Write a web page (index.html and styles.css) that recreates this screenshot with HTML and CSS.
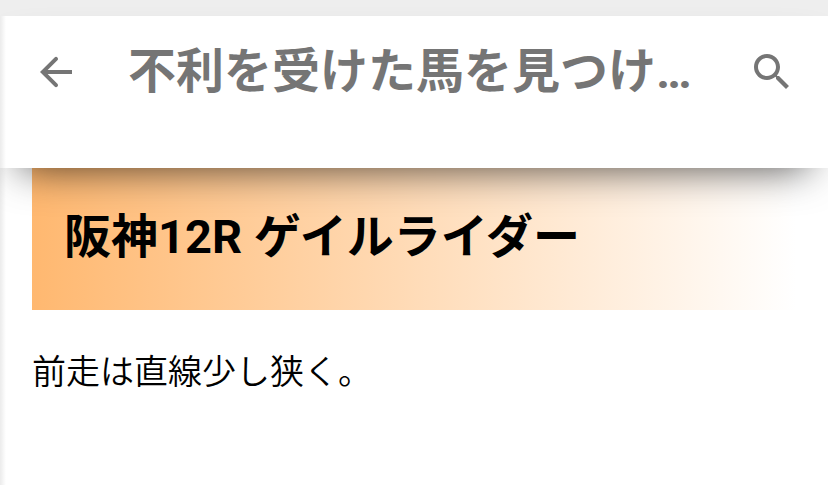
FILE: index.html
```html
<!doctype html>
<html lang="ja">
<head>
  <meta charset="UTF-8">
  <meta name="viewport" content="width=device-width, initial-scale=1">
  <title>不利を受けた馬を見つけ…</title>
  <link rel="stylesheet" href="styles.css">
</head>
<body>
  <div class="page">
    <header class="topbar">
      <a class="icon" href="#" aria-label="戻る">
        <svg viewBox="0 0 24 24" width="48" height="48"><path d="M20 11H7.83l4.88-4.88c.39-.39.39-1.03 0-1.42-.39-.39-1.02-.39-1.41 0L4 12l7.3 7.3c.39.39 1.02.39 1.41 0 .39-.39.39-1.02 0-1.41L7.83 13H20v-2z"/></svg>
      </a>
      <h1 class="title">不利を受けた馬を見つけ…</h1>
      <button class="icon" type="button" aria-label="検索">
        <svg viewBox="0 0 24 24" width="48" height="48"><path d="M15.5 14h-.79l-.28-.27C15.41 12.59 16 11.11 16 9.5 16 5.91 13.09 3 9.5 3S3 5.91 3 9.5 5.91 16 9.5 16c1.61 0 3.09-.59 4.23-1.57l.27.28v.79l5 4.99L20.49 19l-4.99-5zm-6 0C7.01 14 5 11.99 5 9.5S7.01 5 9.5 5 14 7.01 14 9.5 11.99 14 9.5 14z"/></svg>
      </button>
    </header>
    <main class="post">
      <h2 class="race">阪神12R ゲイルライダー</h2>
      <p>前走は直線少し狭く。</p>
    </main>
  </div>
</body>
</html>
```
FILE: styles.css
```css
body {
  margin: 0;
  background: #fff;
  color: #000;
  font-family: Roboto, "Noto Sans CJK JP", sans-serif;
}

.page {
  position: relative;
  min-height: 100vh;
  box-sizing: border-box;
  border-top: 16px solid #eee;
}

/* soft shade down the left edge */
.page::after {
  content: "";
  position: absolute;
  top: 0;
  bottom: 0;
  left: 0;
  width: 6px;
  background: linear-gradient(to right, rgba(0, 0, 0, 0.08), rgba(0, 0, 0, 0));
}

.topbar {
  position: relative;
  display: flex;
  align-items: flex-start;
  padding: 32px 32px 72px;
  background: #fff;
  box-shadow: 0 20px 40px -20px rgba(0, 0, 0, 0.7);
}

.icon {
  flex: none;
  width: 48px;
  height: 48px;
  padding: 0;
  border: 0;
  background: none;
}

.icon svg {
  display: block;
  fill: #757575;
}

.title {
  flex: 1;
  margin: 0 0 0 48px;
  color: #757575;
  font-size: 48px;
  line-height: 48px;
  white-space: nowrap;
}

.post {
  padding: 0 32px;
}

.race {
  margin: 0;
  padding: 38px 32px 42px;
  background: linear-gradient(to right, #ffb870, #fff);
  font-size: 47px;
  line-height: 62px;
}

.post p {
  margin: 32px 0;
  font-size: 34px;
  font-weight: 350;
  line-height: 60px;
}
```
